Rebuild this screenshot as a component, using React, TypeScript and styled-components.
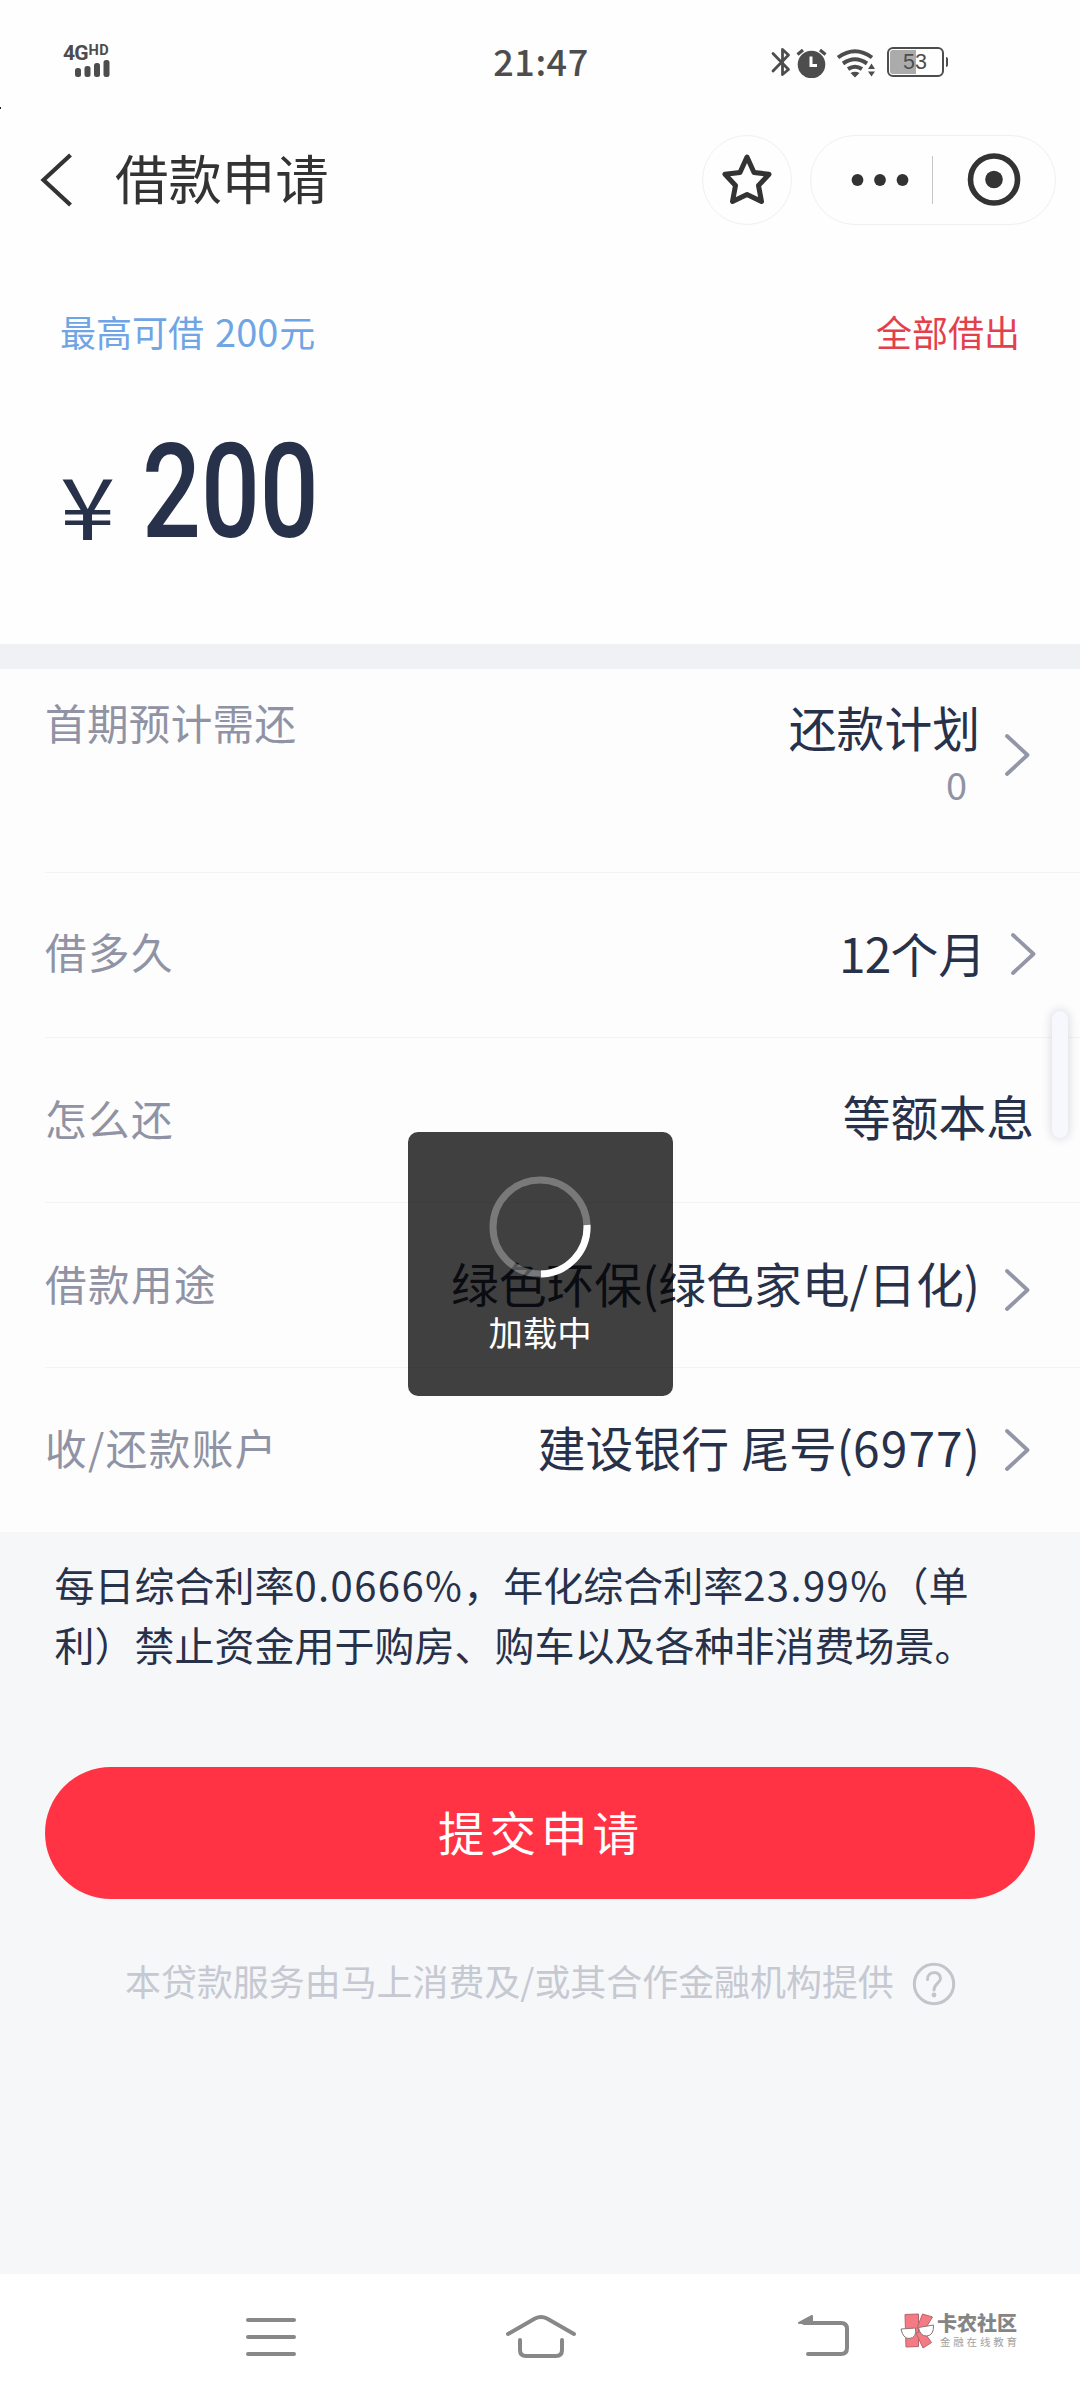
import React from "react";
import styled, { createGlobalStyle } from "styled-components";

const GlobalStyle = createGlobalStyle`
  * { box-sizing: border-box; }
  body { margin: 0; background: #fefefe; }
`;

const Screen = styled.div`
  position: relative;
  display: flex;
  flex-direction: column;
  width: 1080px;
  height: 2400px;
  overflow: hidden;
  background: #fefefe;
  color: #28314a;
  font-family: "Noto Sans CJK SC", "Noto Sans", sans-serif;
  white-space: nowrap;
`;

const StatusBar = styled.header`
  display: grid;
  grid-template-columns: 1fr auto 1fr;
  height: 124px;
  padding: 0 136px 0 63px;
  align-items: center;
  color: #4d4d4d;
`;

const Signal = styled.div`
  display: flex;
  flex-direction: column;
  width: 50px;
  height: 34px;
  margin-top: -2px;
`;

const Network = styled.div`
  display: flex;
  align-items: flex-start;
  height: 16px;
  font: 700 21px/18px Roboto, sans-serif;
  letter-spacing: -0.9px;
`;

const NetworkHd = styled.span`
  font-size: 14.5px;
  line-height: 13px;
  letter-spacing: 0.4px;
  margin-left: 1px;
`;

const Clock = styled.div`
  padding-left: 75px;
  margin-top: -5px;
  font-size: 36px;
  font-weight: 500;
  line-height: 50px;
  letter-spacing: 0.5px;
`;

const StatusIcons = styled.div`
  display: flex;
  justify-content: flex-end;
  align-items: center;
`;

const Battery = styled.div`
  position: relative;
  width: 57px;
  height: 30px;
  margin-left: 11px;
  border: 2.5px solid #4d4d4d;
  border-radius: 6px;
  padding: 1px;
  background: linear-gradient(90deg, #ababab 26px, #fefefe 26px) content-box;
  font: 21.5px/24px "Liberation Sans", sans-serif;
  text-indent: 13px;
  &::after {
    content: "";
    position: absolute;
    right: -6px;
    top: 8px;
    width: 2.5px;
    height: 10px;
    border-radius: 0 2px 2px 0;
    background: #4d4d4d;
  }
`;

const EdgeMark = styled.i`
  position: absolute;
  left: 0;
  top: 107px;
  width: 1px;
  height: 2px;
  background: #222;
`;

const TitleBar = styled.div`
  display: flex;
  align-items: center;
  height: 112px;
  padding: 0 24px 0 38px;
`;

const Title = styled.h1`
  flex: 1;
  margin: 0 0 0 40px;
  padding-bottom: 7px;
  font-size: 53.4px;
  line-height: 70px;
  font-weight: 400;
  color: #333;
`;

const RoundButton = styled.button`
  display: flex;
  align-items: center;
  justify-content: center;
  width: 90px;
  height: 90px;
  padding: 0 0 2px;
  border: 1.5px solid #f0f0f0;
  border-radius: 45px;
  background: none;
`;

const Capsule = styled.div`
  display: flex;
  align-items: center;
  width: 246px;
  height: 90px;
  margin-left: 18px;
  border: 1.5px solid #f0f0f0;
  border-radius: 45px;
`;

const CapsuleHalf = styled.div<{ $inset?: number }>`
  display: flex;
  align-items: center;
  justify-content: center;
  width: 121px;
  padding-left: ${(p) => p.$inset ?? 0}px;
`;

const CapsuleLine = styled.div`
  width: 1px;
  height: 48px;
  background: #c6c6c6;
`;

const AmountSection = styled.section`
  height: 408px;
  padding: 70px 60px 0 60px;
`;

const LimitRow = styled.div`
  display: flex;
  justify-content: space-between;
  font-size: 36px;
  line-height: 50px;
`;

const Limit = styled.span`
  color: #70a5e5;
`;

const LimitNumber = styled.span`
  font-size: 38px;
  margin: 0 1px 0 3px;
`;

const BorrowAll = styled.span`
  color: #e4404c;
`;

const AmountRow = styled.div`
  display: flex;
  align-items: flex-start;
  margin-top: 70px;
  line-height: 132px;
`;

const Currency = styled.span`
  width: 82px;
  margin-top: 11px;
  font-size: 85px;
  transform: scaleX(1.17);
  transform-origin: left;
`;

const Amount = styled.span`
  font-family: Roboto, sans-serif;
  font-size: 132px;
  font-weight: 500;
  transform: scaleX(0.785);
  transform-origin: left;
`;

const Band = styled.div`
  height: 25px;
  background: #f0f1f4;
`;

const List = styled.section`
  height: 863px;
  padding-left: 45px;
  background: #fdfdfe;
`;

const Row = styled.div<{ $h?: number; $right: number; $top?: boolean }>`
  display: flex;
  align-items: ${(p) => (p.$top ? "flex-start" : "center")};
  height: ${(p) => p.$h ?? 165}px;
  padding-right: ${(p) => p.$right}px;
  border-bottom: 1px solid #f3f3f5;
  &:last-child { border-bottom: 0; }
`;

const Label = styled.span<{ $lift?: number; $drop?: number; $track?: number }>`
  flex: 1;
  font-size: 41.6px;
  line-height: 60px;
  letter-spacing: ${(p) => p.$track ?? 1.4}px;
  color: #9093a4;
  padding-top: ${(p) => p.$drop ?? 0}px;
  padding-bottom: ${(p) => p.$lift ?? 0}px;
`;

const Value = styled.div<{ $lift?: number; $drop?: number }>`
  display: flex;
  flex-direction: column;
  align-items: flex-end;
  font-size: 47.8px;
  line-height: 60px;
  padding-top: ${(p) => p.$drop ?? 0}px;
  padding-bottom: ${(p) => p.$lift ?? 0}px;
`;

const SubValue = styled.span`
  margin-right: 13px;
  font-size: 38px;
  line-height: 54px;
  color: #9093a4;
`;

const Num = styled.span<{ $track?: number }>`
  letter-spacing: ${(p) => p.$track ?? 1.2}px;
`;

const Bank = styled.span`
  word-spacing: 1.5px;
`;

const ChevronSvg = styled.svg<{ $drop?: number; $lift?: number }>`
  display: block;
  flex: none;
  width: 30px;
  height: 48px;
  margin-left: 22px;
  margin-top: ${(p) => p.$drop ?? 0}px;
  margin-bottom: ${(p) => p.$lift ?? 0}px;
`;

const Bottom = styled.section`
  height: 742px;
  padding-top: 22px;
  background: #f5f7f9;
`;

const Notice = styled.p`
  margin: 0;
  padding-left: 54.5px;
  font-size: 40px;
  line-height: 60px;
`;

const Rate = styled.span`
  letter-spacing: 1.4px;
`;

const Submit = styled.button`
  display: block;
  width: 990px;
  height: 132px;
  margin: 93px 45px 0;
  padding: 0 0 6px 2px;
  border: 0;
  border-radius: 66px;
  background: #ff3344;
  color: #fff;
  font-family: inherit;
  font-size: 46.5px;
  letter-spacing: 5px;
`;

const Provider = styled.div`
  display: flex;
  align-items: center;
  margin-top: 54px;
  padding-left: 125px;
  font-size: 35.95px;
  line-height: 50px;
  color: #c6c8d2;
  svg { margin: 8px 0 0 17px; }
`;

const NavBar = styled.nav`
  display: flex;
  height: 126px;
  align-items: center;
  padding: 0 0 0 236px;
  background: #fff;
  margin-top: auto;
  svg { flex: none; }
`;

const NavIcon = styled.svg<{ $gap?: number }>`
  display: block;
  margin-left: ${(p) => p.$gap ?? 0}px;
`;

const Brand = styled.div`
  display: flex;
  align-items: center;
  margin-left: 46px;
  margin-bottom: 13px;
`;

const BrandText = styled.div`
  display: flex;
  flex-direction: column;
  margin-left: 2px;
  color: #858585;
`;

const BrandName = styled.span`
  font-size: 20px;
  font-weight: 900;
  line-height: 21px;
`;

const BrandTag = styled.span`
  margin: 1px 0 0 3px;
  font-size: 10.5px;
  line-height: 15px;
  letter-spacing: 2.8px;
  color: #a2a2a2;
`;

const Toast = styled.div`
  position: absolute;
  left: 407.5px;
  top: 1132px;
  display: flex;
  flex-direction: column;
  align-items: center;
  width: 265px;
  height: 264px;
  padding-top: 44px;
  border-radius: 10px;
  background: rgba(0, 0, 0, 0.75);
  color: #fff;
  font-size: 34.4px;
  line-height: 50px;
`;

const ToastText = styled.span`
  margin-top: 28px;
`;

const SideHandle = styled.div`
  position: absolute;
  left: 1052px;
  top: 1011px;
  width: 16px;
  height: 127px;
  border-radius: 8px;
  background: #f7f8fd;
  box-shadow: 0 0 8px 2px rgba(40, 40, 60, 0.13);
`;

const Chevron = ({ drop, lift }: { drop?: number; lift?: number }) => (
  <ChevronSvg $drop={drop} $lift={lift} viewBox="0 0 30 48" fill="none" stroke="#9396a6" strokeWidth="3.8" strokeLinecap="round" strokeLinejoin="round">
    <path d="M5 5 25.5 24 5 43" />
  </ChevronSvg>
);

export default function App() {
  return (
    <Screen>
      <GlobalStyle />
      <StatusBar>
        <Signal>
          <Network>
            4G<NetworkHd>HD</NetworkHd>
          </Network>
          <svg width="50" height="17" viewBox="0 0 50 17" fill="#4d4d4d">
            <rect x="12" y="8" width="6" height="9" rx="2.5" />
            <rect x="21.5" y="6" width="6" height="11" rx="2.5" />
            <rect x="31" y="3" width="6" height="14" rx="2.5" />
            <rect x="40.5" y="0" width="6" height="17" rx="2.5" />
          </svg>
        </Signal>
        <Clock>21:47</Clock>
        <StatusIcons>
          <svg width="105" height="32" viewBox="771 46 105 32" fill="none" stroke="#4d4d4d" strokeWidth="2.8">
            <path d="M773 53.500 788.500 69.500 782.500 74.500V49.500L788.500 55 773 71" strokeLinejoin="round" strokeLinecap="round" />
            <circle cx="811.500" cy="64.500" r="13.800" fill="#4d4d4d" stroke="none" />
            <path d="M811 56.500v9h6" stroke="#fefefe" strokeWidth="3" />
            <path d="M797.500 54.500 803 50M825.500 54.500 820 50" strokeWidth="3.200" />
            <path d="M838 57.500Q855 45 872 57.500M843 63.500Q855 55 867 63.500M848 69Q855 64.500 862 69" strokeWidth="4" />
            <path d="M850.500 73 855 77.500 859.500 73Q855 70.500 850.500 73Z" fill="#4d4d4d" stroke="none" />
            <path d="M868 69 871.500 63.500 875 69ZM868 71.500H875L871.500 76.500Z" fill="#4d4d4d" stroke="none" />
          </svg>
          <Battery>53</Battery>
        </StatusIcons>
      </StatusBar>
      <EdgeMark />

      <TitleBar>
        <svg width="37" height="56" viewBox="0 0 37 56" fill="none" stroke="#333" strokeWidth="4.200">
          <path d="M32.500 3 5.500 28 32.500 53" />
        </svg>
        <Title>借款申请</Title>
        <RoundButton>
          <svg width="54" height="54" viewBox="0 0 54 54" fill="none" stroke="#333" strokeWidth="5" strokeLinejoin="round">
            <path d="M27 5 34 20.500 49 22.200 38.500 33.500 41.500 49.500 27 42.500 12.500 49.500 15.500 33.500 5 22.200 20 20.500Z" />
          </svg>
        </RoundButton>
        <Capsule>
          <CapsuleHalf $inset={18}>
            <svg width="60" height="14" viewBox="0 0 60 14" fill="#333">
              <circle cx="6.500" cy="7" r="5.900" />
              <circle cx="29" cy="7" r="5.900" />
              <circle cx="51.500" cy="7" r="5.900" />
            </svg>
          </CapsuleHalf>
          <CapsuleLine />
          <CapsuleHalf>
            <svg width="54" height="54" viewBox="0 0 54 54">
              <circle cx="27" cy="26.500" r="23.500" fill="none" stroke="#333" strokeWidth="5.600" />
              <circle cx="27" cy="26.500" r="8.800" fill="#333" />
            </svg>
          </CapsuleHalf>
        </Capsule>
      </TitleBar>

      <AmountSection>
        <LimitRow>
          <Limit>
            最高可借 <LimitNumber>200</LimitNumber>元
          </Limit>
          <BorrowAll>全部借出</BorrowAll>
        </LimitRow>
        <AmountRow>
          <Currency>¥</Currency>
          <Amount>200</Amount>
        </AmountRow>
      </AmountSection>
      <Band />

      <List>
        <Row $h={204} $right={48} $top>
          <Label $drop={23} $track={0.3}>首期预计需还</Label>
          <Value $drop={28}>
            <span>还款计划</span>
            <SubValue>0</SubValue>
          </Value>
          <Chevron drop={62} />
        </Row>
        <Row $right={42}>
          <Label $lift={8}>借多久</Label>
          <Value $lift={4}>
            <span><Num $track={-0.8}>12</Num>个月</span>
          </Value>
          <Chevron lift={2} />
        </Row>
        <Row $right={46}>
          <Label $lift={4}>怎么还</Label>
          <Value $lift={9}>等额本息</Value>
        </Row>
        <Row $right={48}>
          <Label $lift={4}>借款用途</Label>
          <Value $lift={5}>绿色环保(绿色家电/日化)</Value>
          <Chevron drop={9} />
        </Row>
        <Row $h={164} $right={48}>
          <Label $lift={6}>收/还款账户</Label>
          <Value $lift={6}>
            <Bank>建设银行 尾号(<Num>6977</Num>)</Bank>
          </Value>
          <Chevron />
        </Row>
      </List>

      <Bottom>
        <Notice>
          每日综合利率<Rate>0.0666%</Rate>，年化综合利率<Rate>23.99%</Rate>（单
          <br />
          利）禁止资金用于购房、购车以及各种非消费场景。
        </Notice>
        <Submit>提交申请</Submit>
        <Provider>
          本贷款服务由马上消费及/或其合作金融机构提供
          <svg width="46" height="46" viewBox="0 0 46 46" fill="none" stroke="#c3c5ca" strokeWidth="3">
            <circle cx="23" cy="23" r="19.700" />
            <path d="M16.500 18.500C16.500 9.500 29.500 9.500 29.500 17.500C29.500 22 23 22.500 23 29" strokeLinecap="round" />
            <circle cx="23" cy="34" r="2.400" fill="#c3c5ca" stroke="none" />
          </svg>
        </Provider>
      </Bottom>

      <NavBar>
        <NavIcon width="70" height="50" viewBox="236 2312 70 50" stroke="#888" strokeWidth="4" strokeLinecap="round">
          <path d="M248 2320H294M248 2337H294M248 2354H294" />
        </NavIcon>
        <NavIcon $gap={194} width="82" height="50" viewBox="500 2312 82 50" fill="none" stroke="#888" strokeWidth="4" strokeLinecap="round">
          <path d="M508 2334 535 2318.500Q541 2315.500 547 2318.500L574 2334M520 2340V2350Q520 2356 526 2356H556Q562 2356 562 2350V2340" />
        </NavIcon>
        <NavIcon $gap={208} width="64" height="50" viewBox="790 2312 64 50" fill="none" stroke="#888" strokeWidth="4" strokeLinecap="round">
          <path d="M804 2323H841Q847 2323 847 2329V2348Q847 2354 841 2354H808" />
          <path d="M799 2323 812 2316V2323Z" fill="#888" strokeWidth="2" strokeLinejoin="round" />
        </NavIcon>
        <Brand>
          <svg width="35" height="36" viewBox="0 0 35 36">
            <g fill="#f47a83" stroke="#b5656b" strokeWidth="1">
              <path d="M5 1.500 18.500 1V33.500L6 34Z" />
              <path d="M17 15 22.500 1 32.500 4 24 18Z" />
              <path d="M16 20 23 17.500 31.500 29.500 23 35Z" />
            </g>
            <g fill="#fff" stroke="#8b7678" strokeWidth="1">
              <path d="M1 16 15.500 15Q17 25 9 25.500Q3 25.500 1 16Z" />
              <path d="M18.500 14.500 33.500 12Q34 22.500 26.500 23Q20 23 18.500 14.500Z" />
            </g>
          </svg>
          <BrandText>
            <BrandName>卡农社区</BrandName>
            <BrandTag>金融在线教育</BrandTag>
          </BrandText>
        </Brand>
      </NavBar>

      <Toast>
        <svg width="102" height="102" viewBox="0 0 102 102" fill="none" strokeWidth="7">
          <circle cx="51" cy="51" r="47" stroke="rgba(255,255,255,0.3)" />
          <path d="M98 49A47 47 0 0 1 52 98" stroke="#fff" />
        </svg>
        <ToastText>加载中</ToastText>
      </Toast>
      <SideHandle />
    </Screen>
  );
}
